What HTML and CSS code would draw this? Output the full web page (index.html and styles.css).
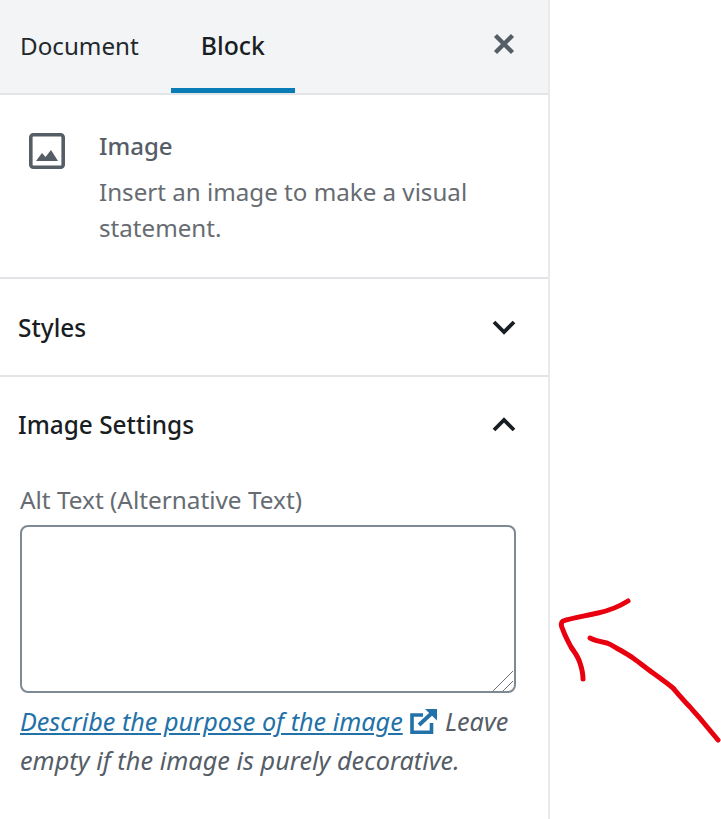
FILE: index.html
```html
<!DOCTYPE html>
<html lang="en">
<head>
<meta charset="utf-8">
<title>Image block settings</title>
<link rel="stylesheet" href="styles.css">
</head>
<body>
<aside class="sidebar">
  <header class="tabs">
    <div class="tab">Document</div>
    <div class="tab tab-active">Block</div>
    <svg class="close" viewBox="0 0 24 24" width="24" height="24"><path d="M3.5 3.5 20.500 20.500M20.500 3.500 3.500 20.500" fill="none" stroke="#555d66" stroke-width="4.400"/></svg>
  </header>
  <section class="block-card">
    <svg class="block-icon" viewBox="0 0 36 36" width="36" height="36"><rect x="1.800" y="1.800" width="32.400" height="32.400" rx="2.500" fill="none" stroke="#555d66" stroke-width="3.600"/><path d="M7 28 13 20 16.500 24 22 17 29 28Z" fill="#555d66"/></svg>
    <div class="block-text">
      <div class="block-title">Image</div>
      <div class="block-desc">Insert an image to make a visual statement.</div>
    </div>
  </section>
  <section class="panel panel-closed">
    <span>Styles</span>
    <svg class="chevron" viewBox="0 0 24 16" width="24" height="16"><path d="M2 3 12 13 22 3" fill="none" stroke="#191e23" stroke-width="3.800"/></svg>
  </section>
  <section class="panel-open">
    <div class="panel">
      <span>Image Settings</span>
      <svg class="chevron" viewBox="0 0 24 16" width="24" height="16"><path d="M2 13 12 3 22 13" fill="none" stroke="#191e23" stroke-width="3.800"/></svg>
    </div>
    <div class="field">
      <label class="field-label" for="alt">Alt Text (Alternative Text)</label>
      <div class="input-wrap">
        <textarea class="alt-input" id="alt"></textarea>
        <svg class="grip" viewBox="0 0 22 22" width="22" height="22"><path d="M21 1 1 21M21 11 11 21" fill="none" stroke="#6a6f75" stroke-width="1"/></svg>
      </div>
      <p class="help"><a class="help-link" href="#">Describe the purpose of the image</a> <svg class="ext" viewBox="0 0 27 25" width="27" height="25"><path d="M13 6H2V23.200H21.500V14" fill="none" stroke="#2271a8" stroke-width="3.600"/><path d="M9 16 22 4" fill="none" stroke="#2271a8" stroke-width="3.800"/><path d="M15 0H27V11.500Z" fill="#2271a8"/></svg> Leave empty if the image is purely decorative.</p>
    </div>
  </section>
</aside>
<svg class="arrow" viewBox="0 0 721 819" width="721" height="819"><path d="M628 601 C620 606 612 610 598 613 C585 616 572 618 563 621 C560 623 561 626 563 630 C565 636 568 641 571 647 C575 653 578 656 580 663 C582 669 583 674 583 679" fill="none" stroke="#e8000f" stroke-width="5" stroke-linecap="round" stroke-linejoin="round"/><path d="M590 638 C596 641 602 642 607 643 C612 645 616 648 620 650 C625 653 629 655 633 658 C640 663 646 668 653 673 C660 678 667 683 673 688 C679 695 684 701 690 707 C695 713 699 717 703 722 C708 728 713 734 718 740" fill="none" stroke="#e8000f" stroke-width="5" stroke-linecap="round" stroke-linejoin="round"/></svg>
</body>
</html>
```
FILE: styles.css
```css
* { box-sizing: border-box; }
html, body { margin: 0; padding: 0; height: 100%; background: #fff; overflow: hidden; }
body { position: relative; font-family: "Noto Sans", "Open Sans", sans-serif; color: #191e23; }
.sidebar { width: 550px; height: 819px; border-right: 2px solid #e9eaec; }
.tabs { height: 95px; background: #f3f4f5; border-bottom: 2px solid #e2e4e7; display: flex; align-items: stretch; position: relative; padding-left: 2px; }
.tab { font-size: 24.200px; line-height: 91px; padding: 0 18px; color: #23282d; height: 93px; }
.tab-active { margin-left: 14px; padding: 0 30px; font-size: 24.800px; font-weight: 500; border-bottom: 5px solid #0a7cb5; color: #191e23; }
.close { position: absolute; right: 32px; top: 32px; }
.block-card { height: 184px; border-bottom: 2px solid #e2e4e7; display: flex; padding: 38px 20px 0 29px; }
.block-icon { flex: none; margin-right: 34px; }
.block-title { font-size: 24px; font-weight: 500; color: #555d66; line-height: 30px; margin-top: -2px; }
.block-desc { font-size: 24.150px; color: #666c72; line-height: 36px; margin-top: 13px; }
.panel { display: flex; justify-content: space-between; align-items: center; font-size: 24.400px; font-weight: 500; padding: 0 32px 0 18px; height: 96px; color: #191e23; }
.panel > span { position: relative; top: -1px; }
.panel-closed { height: 98px; border-bottom: 2px solid #e2e4e7; }
.panel-closed > span { top: 0; }
.field { padding: 0 32px 0 20px; margin-top: 9px; }
.field-label { display: block; font-size: 24.350px; color: #666c72; line-height: 36px; }
.input-wrap { position: relative; width: 496px; margin-top: 7px; }
.alt-input { display: block; width: 496px; height: 168px; border: 2px solid #7e8993; border-radius: 8px; background: #fff; resize: none; }
.grip { position: absolute; right: 2px; bottom: 1px; }
.help { margin: 9px 0 0; font-size: 25.200px; line-height: 39px; font-style: italic; color: #555d66; letter-spacing: 0.05px; }
.help-link { color: #2271a8; text-decoration: underline; letter-spacing: 0; }
.ext { vertical-align: -3px; margin: 0 1px; }
.arrow { position: absolute; left: 0; top: 0; pointer-events: none; }
```
